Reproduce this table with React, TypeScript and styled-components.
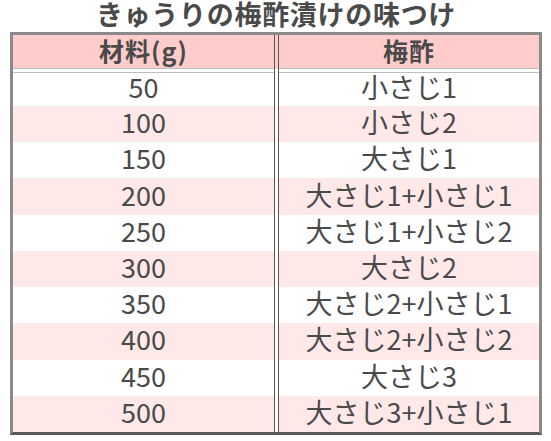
import React from "react";
import styled, { createGlobalStyle } from "styled-components";

const GlobalStyle = createGlobalStyle`
  html, body {
    margin: 0;
    padding: 0;
    background: #ffffff;
  }
  body {
    font-family: "Noto Sans CJK JP", sans-serif;
    color: #4a4a4a;
  }
`;

const Page = styled.div`
  width: 551px;
  padding: 0 9px 0 10px;
  box-sizing: border-box;
`;

const Title = styled.h1`
  margin: 0;
  height: 32px;
  line-height: 28px;
  text-align: center;
  font-size: 27px;
  font-weight: 700;
  letter-spacing: 0.7px;
  color: #4a4a4a;
`;

const Table = styled.div`
  width: 532px;
  box-sizing: border-box;
  border: 3px solid #8a8a8a;
  border-bottom-color: #5a5a5a;
  background: #ffffff;
  display: flex;
  flex-direction: column;
`;

const RowBase = styled.div`
  display: grid;
  grid-template-columns: 261px 5px 260px;
  align-items: stretch;
`;

const HeadRow = styled(RowBase)`
  height: 34px;
  background: #ffcccc;
`;

const Gap = styled(RowBase)`
  height: 3px;
  background: #ffffff;
`;

const Row = styled(RowBase)<{ $h: number }>`
  height: ${(p) => p.$h}px;
  background: #ffffff;
`;

const Divider = styled.div`
  grid-column: 2;
  box-sizing: border-box;
  border-left: 1px solid #555555;
  border-right: 1px solid #555555;
`;

const HeadCell = styled.div`
  box-sizing: border-box;
  border-bottom: 1px solid #bdbdbd;
  display: flex;
  align-items: center;
  justify-content: center;
  font-size: 25px;
  line-height: 1;
  font-weight: 700;
  letter-spacing: 1px;
  color: #4a4a4a;
  padding-bottom: 3px;
`;

const Cell = styled.div<{ $tint: boolean; $first: boolean }>`
  box-sizing: border-box;
  background: ${(p) => (p.$tint ? "#ffe8e8" : "#ffffff")};
  border-top: ${(p) => (p.$first ? "1px solid #bdbdbd" : "none")};
  display: flex;
  align-items: center;
  justify-content: center;
  font-size: 27px;
  line-height: 1;
  color: #4a4a4a;
  padding-bottom: ${(p) => (p.$first ? 6 : 5)}px;
`;

const rows: [string, string][] = [
  ["50", "小さじ1"],
  ["100", "小さじ2"],
  ["150", "大さじ1"],
  ["200", "大さじ1+小さじ1"],
  ["250", "大さじ1+小さじ2"],
  ["300", "大さじ2"],
  ["350", "大さじ2+小さじ1"],
  ["400", "大さじ2+小さじ2"],
  ["450", "大さじ3"],
  ["500", "大さじ3+小さじ1"],
];

export default function App() {
  return (
    <>
      <GlobalStyle />
      <Page>
        <Title>きゅうりの梅酢漬けの味つけ</Title>
        <Table>
          <HeadRow>
            <HeadCell>材料(g)</HeadCell>
            <Divider />
            <HeadCell>梅酢</HeadCell>
          </HeadRow>
          <Gap>
            <Divider />
          </Gap>
          {rows.map(([amount, vinegar], i) => (
            <Row key={amount} $h={i === 0 ? 34 : 36.22}>
              <Cell $tint={i % 2 === 1} $first={i === 0}>
                {amount}
              </Cell>
              <Divider />
              <Cell $tint={i % 2 === 1} $first={i === 0}>
                {vinegar}
              </Cell>
            </Row>
          ))}
        </Table>
      </Page>
    </>
  );
}
